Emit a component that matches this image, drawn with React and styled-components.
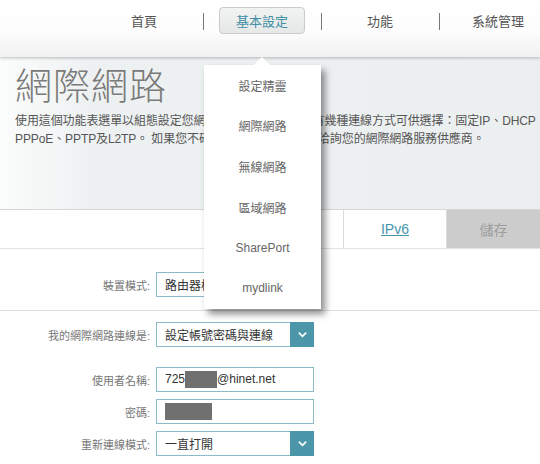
import React from 'react';
import styled, { createGlobalStyle } from 'styled-components';

const GlobalStyle = createGlobalStyle`
  body {
    margin: 0;
    background: #fff;
    font-family: "Liberation Sans", "Noto Sans CJK TC", sans-serif;
    color: #555;
  }
`;

const Page = styled.div`
  position: relative;
  width: 540px;
  height: 464px;
  overflow: hidden;
`;

const Header = styled.header`
  position: relative;
  z-index: 2;
  height: 57px;
  display: flex;
  padding-left: 85px;
  background: linear-gradient(#ffffff 0%, #fdfdfd 55%, #f1f1f1 100%);
  box-shadow: 0 1px 3px rgba(0, 0, 0, 0.25);
`;

const NavItem = styled.div`
  position: relative;
  flex: none;
  width: 118px;
  display: flex;
  justify-content: center;
  padding-top: 7px;
  box-sizing: border-box;
  font-size: 13px;
  color: ${p => (p.$active ? '#3d8fa4' : '#555')};

  &:not(:first-child)::before {
    content: '';
    position: absolute;
    left: 0;
    top: 13px;
    width: 1px;
    height: 17px;
    background: #777;
  }
`;

const NavLabel = styled.span`
  width: 86px;
  height: 27px;
  display: flex;
  align-items: center;
  justify-content: center;
  box-sizing: border-box;
  border-radius: 4px;
  border: 1px solid ${p => (p.$active ? '#c9cbcc' : 'transparent')};
  background: ${p => (p.$active ? 'linear-gradient(#f1f2f2, #e6e8e8)' : 'none')};
`;

const Hero = styled.section`
  height: 153px;
  box-sizing: border-box;
  padding: 11px 0 0 15px;
  background: linear-gradient(to right, #fbfcfc 0, #eef1f2 90px, #eceff0 100%);
  border-bottom: 1px solid #d4d6d7;
`;

const Title = styled.h1`
  margin: 0;
  font-size: 37px;
  line-height: 40px;
  font-weight: 300;
  color: #7a7a7a;
  letter-spacing: 1px;
`;

const Desc = styled.p`
  margin: 4px 0 0;
  font-size: 12px;
  line-height: 18px;
  color: #555;
  white-space: nowrap;
  letter-spacing: -0.1px;
`;

const TabRow = styled.div`
  height: 38px;
  display: flex;
  justify-content: flex-end;
  border-bottom: 1px solid #e2e2e2;
`;

const Tab = styled.div`
  width: ${p => p.$w}px;
  display: flex;
  align-items: center;
  justify-content: center;
  font-size: 14px;
  box-sizing: border-box;
  background: ${p => (p.$grey ? '#cccccc' : '#fff')};
  color: ${p => (p.$grey ? '#9c9c9c' : '#4596ab')};
  border-left: 1px solid #dcdcdc;
  text-decoration: ${p => (p.$link ? 'underline' : 'none')};
`;

const Group = styled.div`
  padding: ${p => p.$pad};
  border-bottom: ${p => (p.$line ? '1px solid #dedede' : 'none')};
  display: flex;
  flex-direction: column;
`;

const Row = styled.div`
  display: flex;
  align-items: center;
  margin-top: ${p => p.$mt || 0}px;
`;

const Label = styled.label`
  width: 156px;
  padding-right: 6px;
  box-sizing: border-box;
  text-align: right;
  font-size: 11px;
  color: #777;
`;

const Field = styled.div`
  width: 158px;
  height: ${p => p.$h || 25}px;
  box-sizing: border-box;
  display: flex;
  align-items: center;
  border: 1px solid #8bbac8;
  font-size: 12px;
  color: #333;
  padding-left: 8px;
  background: #fff;
`;

const FieldText = styled.span`
  flex: 1;
  white-space: nowrap;
  overflow: hidden;
`;

const Arrow = styled.span`
  width: 24px;
  align-self: stretch;
  margin: -1px -1px -1px 0;
  background: #4b96a8;
  display: flex;
  align-items: center;
  justify-content: center;
`;

const Blur = styled.span`
  display: inline-block;
  width: ${p => p.$w}px;
  height: 17px;
  background: #707070;
  vertical-align: middle;
`;

const Menu = styled.ul`
  position: absolute;
  z-index: 3;
  left: 204px;
  top: 65px;
  width: 117px;
  margin: 0;
  padding: 0;
  list-style: none;
  background: #fff;
  box-shadow: 4px 5px 7px rgba(0, 0, 0, 0.45);

  &::before {
    content: '';
    position: absolute;
    left: 50px;
    top: -8px;
    border-left: 8px solid transparent;
    border-right: 8px solid transparent;
    border-bottom: 8px solid #fff;
  }
`;

const MenuItem = styled.li`
  height: 40.6px;
  display: flex;
  align-items: center;
  justify-content: center;
  font-size: 12px;
  color: #666;
`;

const Chevron = () => (
  <svg width="11" height="11" viewBox="0 0 12 12">
    <path d="M2 4l4 4 4-4" fill="none" stroke="#fff" strokeWidth="1.8" />
  </svg>
);

const nav = ['首頁', '基本設定', '功能', '系統管理'];
const menu = ['設定精靈', '網際網路', '無線網路', '區域網路', 'SharePort', 'mydlink'];

export default function App() {
  return (
    <Page>
      <GlobalStyle />
      <Header>
        {nav.map(n => (
          <NavItem key={n} $active={n === '基本設定'}>
            <NavLabel $active={n === '基本設定'}>{n}</NavLabel>
          </NavItem>
        ))}
      </Header>
      <Menu>
        {menu.map(m => (
          <MenuItem key={m}>{m}</MenuItem>
        ))}
      </Menu>
      <Hero>
        <Title>網際網路</Title>
        <Desc>
          使用這個功能表選單以組態設定您網際網路連線的方式。有幾種連線方式可供選擇：固定IP、DHCP、
          <br />
          PPPoE、PPTP及L2TP。 如果您不確定您的連線方式，請洽詢您的網際網路服務供應商。
        </Desc>
      </Hero>
      <TabRow>
        <Tab $w={103} $link>IPv6</Tab>
        <Tab $w={94} $grey>儲存</Tab>
      </TabRow>
      <Group $line $pad="23px 0 13px">
        <Row>
          <Label>裝置模式:</Label>
          <Field>
            <FieldText>路由器模式</FieldText>
          </Field>
        </Row>
      </Group>
      <Group $pad="11px 0 0">
        <Row>
          <Label>我的網際網路連線是:</Label>
          <Field>
            <FieldText>設定帳號密碼與連線</FieldText>
            <Arrow><Chevron /></Arrow>
          </Field>
        </Row>
        <Row $mt={20}>
          <Label>使用者名稱:</Label>
          <Field>
            <FieldText>725<Blur $w={32} />@hinet.net</FieldText>
          </Field>
        </Row>
        <Row $mt={7}>
          <Label>密碼:</Label>
          <Field>
            <FieldText><Blur $w={47} /></FieldText>
          </Field>
        </Row>
        <Row $mt={7}>
          <Label>重新連線模式:</Label>
          <Field>
            <FieldText>一直打開</FieldText>
            <Arrow><Chevron /></Arrow>
          </Field>
        </Row>
      </Group>
    </Page>
  );
}
